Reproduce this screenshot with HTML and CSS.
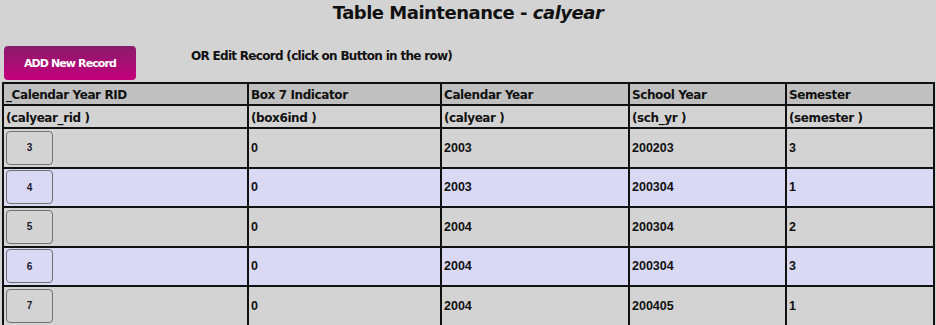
FILE: index.html
```html
<!DOCTYPE html>
<html>
<head>
<meta charset="utf-8">
<link rel="stylesheet" href="styles.css">
</head>
<body>
<h1 class="title">Table Maintenance - <em>calyear</em></h1>
<div class="toolbar">
  <button class="add-btn">ADD New Record</button>
  <span class="hint">OR Edit Record (click on Button in the row)</span>
</div>
<table class="grid">
  <colgroup>
    <col class="c1"><col class="c2"><col class="c3"><col class="c4"><col class="c5">
  </colgroup>
  <thead>
    <tr class="head"><th>_Calendar Year RID</th><th>Box 7 Indicator</th><th>Calendar Year</th><th>School Year</th><th>Semester</th></tr>
    <tr class="sub"><th>(calyear_rid )</th><th>(box6ind )</th><th>(calyear )</th><th>(sch_yr )</th><th>(semester )</th></tr>
  </thead>
  <tbody>
    <tr><td><button class="row-btn">3</button></td><td>0</td><td>2003</td><td>200203</td><td>3</td></tr>
    <tr class="alt"><td><button class="row-btn">4</button></td><td>0</td><td>2003</td><td>200304</td><td>1</td></tr>
    <tr><td><button class="row-btn">5</button></td><td>0</td><td>2004</td><td>200304</td><td>2</td></tr>
    <tr class="alt"><td><button class="row-btn">6</button></td><td>0</td><td>2004</td><td>200304</td><td>3</td></tr>
    <tr><td><button class="row-btn">7</button></td><td>0</td><td>2004</td><td>200405</td><td>1</td></tr>
  </tbody>
</table>
</body>
</html>
```
FILE: styles.css
```css
html, body {
  margin: 0;
  padding: 0;
  background: #d3d3d3;
}
body {
  padding: 0 2px;
  font-family: "DejaVu Sans", "Liberation Sans", sans-serif;
  color: #111;
}
.title {
  margin: 0;
  padding-top: 2px;
  height: 26px;
  text-align: center;
  font-size: 18px;
  font-weight: bold;
  line-height: 22px;
  letter-spacing: -0.5px;
}
.title em {
  font-style: italic;
}
.toolbar {
  display: flex;
  align-items: flex-start;
  margin-top: 18px;
  padding-left: 2px;
  height: 36px;
}
.add-btn {
  width: 132px;
  height: 34px;
  border: none;
  border-radius: 4px;
  background: linear-gradient(#8a1c6b, #c4007c);
  color: #fff;
  font-family: "DejaVu Sans", sans-serif;
  font-weight: bold;
  font-size: 11px;
  letter-spacing: -0.9px;
  padding: 0;
}
.hint {
  margin-left: 55px;
  margin-top: 3px;
  font-size: 12px;
  font-weight: bold;
  letter-spacing: -0.7px;
}
.grid {
  border-collapse: collapse;
  width: 931px;
  table-layout: fixed;
  border: 2px solid #111;
}
.c1 { width: 245px; }
.c2 { width: 193px; }
.c3 { width: 188px; }
.c4 { width: 157px; }
.c5 { width: 148px; }
.grid th, .grid td {
  border: 2px solid #111;
  text-align: left;
  padding: 0 2px;
  font-weight: bold;
}
.grid th {
  font-size: 12px;
  letter-spacing: -0.4px;
  height: 18px;
  padding-top: 2px;
}
.grid tr.head th {
  background: #c0c0c0;
}
.grid tr.sub th {
  height: 19px;
}
.grid td {
  font-family: "Liberation Sans", Arial, sans-serif;
  font-size: 12.5px;
  height: 37.5px;
  padding: 0 2px;
}
.grid tr.alt td {
  background: #d9d9f4;
}
.row-btn {
  display: block;
  width: 47px;
  height: 34px;
  border: 1px solid #707070;
  border-radius: 4px;
  background: transparent;
  font-family: "Liberation Sans", Arial, sans-serif;
  font-size: 10px;
  font-weight: bold;
  color: #1a1a2e;
  padding: 0;
  margin-left: 0;
}
```
